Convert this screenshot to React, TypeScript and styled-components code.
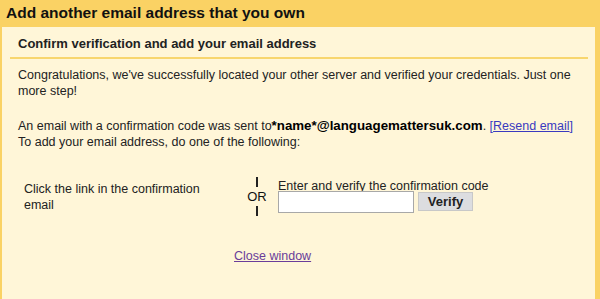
import React from "react";
import styled, { createGlobalStyle } from "styled-components";

const Global = createGlobalStyle`
  html, body { margin: 0; padding: 0; height: 100%; }
  body { background: #fad264; font-family: Arial, "Liberation Sans", sans-serif; overflow: hidden; }
  #root { height: 100%; }
`;

const Page = styled.div`
  height: 299px;
  display: flex;
  flex-direction: column;
`;

const Title = styled.h1`
  margin: 0;
  padding: 4px 0 0 6px;
  height: 23px;
  font-size: 15.5px;
  font-weight: bold;
  color: #111;
`;

const Panel = styled.div`
  flex: 1;
  margin: 0 5px 0 2px;
  background: #fff6d8;
  padding: 0 7px 0 8px;
`;

const SubHeader = styled.div`
  padding: 9px 0 0 8px;
  height: 21px;
  border-bottom: 2px solid #f8d66e;
  font-size: 13px;
  font-weight: bold;
  color: #222;
`;

const Body = styled.div`
  padding: 8px 0 0 8px;
  font-size: 12.5px;
  color: #222;
  line-height: 16px;
`;

const Para = styled.p<{ $last?: boolean }>`
  margin: 0 0 ${(p) => (p.$last ? 0 : 19)}px 0;
`;

const Email = styled.b`
  font-size: 13.3px;
  color: #000;
`;

const Link = styled.a<{ $visited?: boolean }>`
  color: ${(p) => (p.$visited ? "#6a3d9a" : "#3a3ac0")};
  text-decoration: underline;
  cursor: pointer;
`;

const Bracket = styled.span`
  color: #3a3ac0;
`;

const Options = styled.div`
  display: grid;
  grid-template-columns: 219px 28px auto;
  align-items: center;
  margin-top: 27px;
  padding-left: 6px;
`;

const OptionText = styled.div`
  width: 190px;
`;

const Or = styled.div`
  display: flex;
  flex-direction: column;
  align-items: center;
  gap: 3px;
  font-size: 13px;
  line-height: 13px;
  color: #111;
`;

const Bar = styled.div`
  width: 1.5px;
  height: 10px;
  background: #222;
`;

const CodeBlock = styled.div`
  display: flex;
  flex-direction: column;
  padding-left: 7px;
  margin-top: -3px;
`;

const CodeRow = styled.div`
  display: flex;
  align-items: center;
  gap: 4px;
  margin-top: -3px;
`;

const CodeInput = styled.input`
  box-sizing: border-box;
  width: 136px;
  height: 22px;
  border: 1px solid #a8a8a8;
  background: #fff;
  margin: 0;
`;

const VerifyButton = styled.button`
  box-sizing: border-box;
  height: 19px;
  width: 55px;
  background: #dcdde0;
  border: 1px solid #c8c8c8;
  font-family: Arial, "Liberation Sans", sans-serif;
  font-size: 13px;
  font-weight: bold;
  color: #222;
  padding: 0;
`;

const Footer = styled.div`
  display: flex;
  margin-top: 32px;
  padding-left: 216px;
`;

export default function App() {
  return (
    <Page>
      <Global />
      <Title>Add another email address that you own</Title>
      <Panel>
        <SubHeader>Confirm verification and add your email address</SubHeader>
        <Body>
          <Para>
            Congratulations, we've successfully located your other server and verified your credentials. Just one
            more step!
          </Para>
          <Para $last>
            An email with a confirmation code was sent to<Email>*name*@languagemattersuk.com</Email>.{" "}
            <Bracket>[</Bracket>
            <Link>Resend email</Link>
            <Bracket>]</Bracket>
            <br />
            To add your email address, do one of the following:
          </Para>
          <Options>
            <OptionText>Click the link in the confirmation email</OptionText>
            <Or>
              <Bar />
              <span>OR</span>
              <Bar />
            </Or>
            <CodeBlock>
              <span>Enter and verify the confirmation code</span>
              <CodeRow>
                <CodeInput type="text" />
                <VerifyButton>Verify</VerifyButton>
              </CodeRow>
            </CodeBlock>
          </Options>
          <Footer>
            <Link $visited>Close window</Link>
          </Footer>
        </Body>
      </Panel>
    </Page>
  );
}
